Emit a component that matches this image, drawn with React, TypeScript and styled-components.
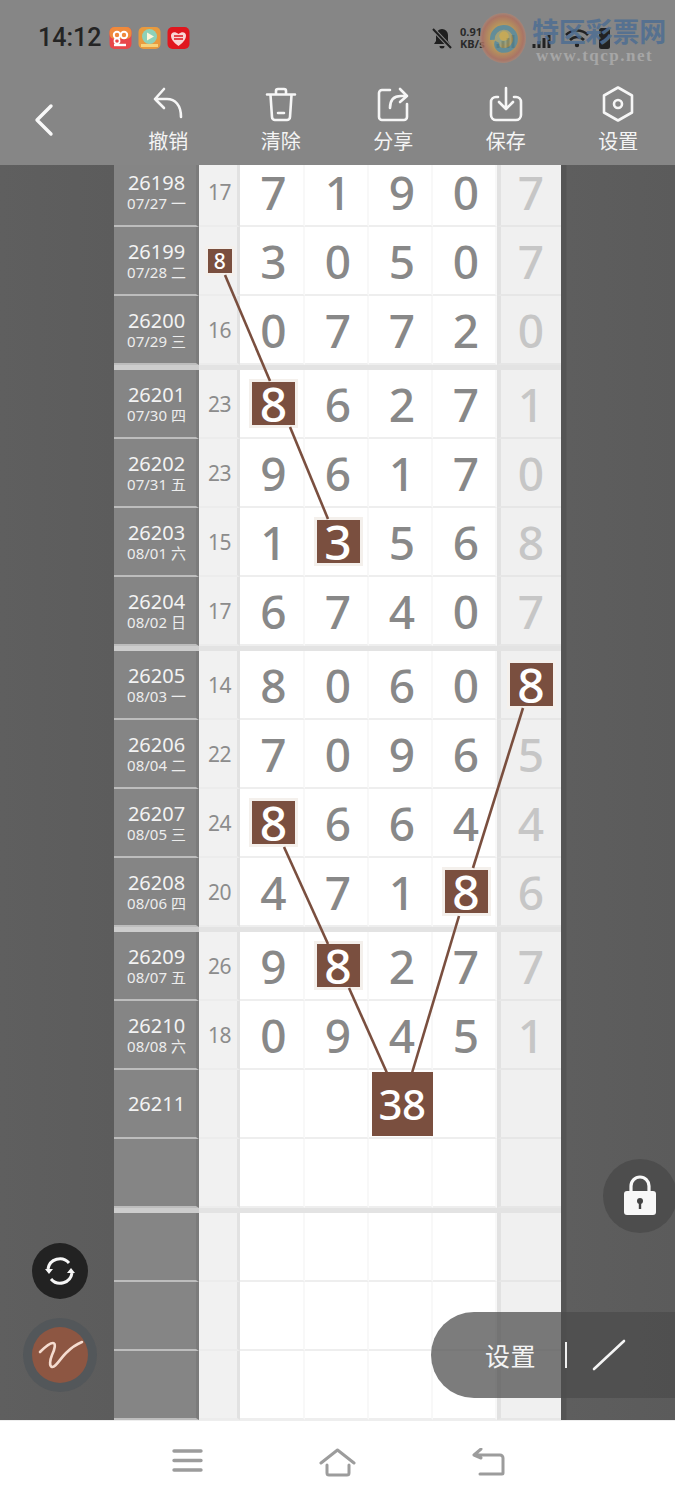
import React from "react";
import styled, { createGlobalStyle } from "styled-components";

const Global = createGlobalStyle`
  html, body { margin: 0; padding: 0; background: #fff; }
  body { font-family: "Noto Sans", "Noto Sans CJK SC", sans-serif; }
  * { box-sizing: border-box; }
`;

const Page = styled.div`
  position: relative;
  width: 675px;
  height: 1500px;
  overflow: hidden;
  display: flex;
  flex-direction: column;
  background: #fff;
`;

const Header = styled.header`
  height: 165px;
  background: #868686;
  display: flex;
  flex-direction: column;
  position: relative;
  z-index: 1;
`;

const StatusBar = styled.div`
  height: 76px;
  padding: 0 0 0 38px;
  display: flex;
  align-items: center;
`;

const Clock = styled.span`
  font: 500 25px/30px Roboto, sans-serif;
  color: #242424;
  margin-right: 8px;
`;

const AppIcons = styled.div`
  display: flex;
  gap: 6px;
`;

const StatusRight = styled.div`
  margin-left: auto;
  display: flex;
  align-items: center;
  padding-right: 65px;
  gap: 6px;
  color: #222;
`;

const Speed = styled.span`
  font: 700 11px/12px "Noto Sans", sans-serif;
  width: 30px;
  color: #2a2a2a;
`;

const Watermark = styled.div`
  position: absolute;
  left: 478px;
  top: 9px;
  width: 197px;
  height: 56px;
  display: flex;
  gap: 4px;
  z-index: 2;
`;

const WatermarkLogo = styled.svg`
  flex: none;
  opacity: 0.85;
`;

const WatermarkText = styled.div`
  display: flex;
  flex-direction: column;
  align-items: flex-start;
  padding-top: 5px;
`;

const WatermarkTitle = styled.span`
  font: 700 27px/33px "Noto Sans CJK SC", sans-serif;
  color: #4e6e92;
  opacity: 0.85;
  letter-spacing: -0.2px;
`;

const WatermarkUrl = styled.span`
  font: 700 17px/17px "Liberation Serif", serif;
  color: #a6a6a6;
  letter-spacing: 1.5px;
  margin-left: 4px;
  white-space: nowrap;
`;

const Toolbar = styled.nav`
  height: 89px;
  display: flex;
  align-items: flex-start;
`;

const BackButton = styled.div`
  width: 112px;
  height: 89px;
  padding: 26px 0 0 32px;
`;

const ToolItem = styled.div`
  width: 112.5px;
  display: flex;
  flex-direction: column;
  align-items: center;
  padding-top: 10px;
`;

const ToolIcon = styled.div`
  width: 36px;
  height: 36px;
  display: flex;
  align-items: center;
  justify-content: center;
`;

const ToolLabel = styled.span`
  font: 400 20px/26px "Noto Sans CJK SC", sans-serif;
  color: #f4f4f4;
  margin-top: 6px;
`;

const Main = styled.main`
  position: relative;
  height: 1255px;
  display: flex;
  background: #5b5b5b;
  overflow: hidden;
`;

const Side = styled.div<{ $w: number; $right?: boolean }>`
  width: ${(p) => p.$w}px;
  background: ${(p) =>
    p.$right
      ? "linear-gradient(90deg, #555 0, #555 5px, #5e5e5e 6px, #5b5b5b 100%)"
      : "linear-gradient(90deg, #5f5f5f 0, #5c5c5c 100%)"};
`;

const Table = styled.div`
  width: 447px;
  display: flex;
  flex-direction: column;
  background: #fff;
`;

const RowEl = styled.div<{ $clip?: boolean }>`
  height: 69px;
  margin-top: ${(p) => (p.$clip ? "-7px" : "0")};
  display: flex;
  flex: none;
`;

const Info = styled.div`
  width: 85px;
  background: #858585;
  border-bottom: 2px solid #bdbdbd;
  border-right: 3px solid #7b7b7b;
  display: flex;
  flex-direction: column;
  align-items: center;
  justify-content: center;
  color: #f3f3f3;
  padding-left: 3px;
`;

const Period = styled.span`
  font: 400 20px/23px "Noto Sans", sans-serif;
`;

const DateText = styled.span`
  font: 400 15px/19px "Noto Sans", "Noto Sans CJK SC", sans-serif;
  white-space: nowrap;
  color: #ededed;
`;

const Sum = styled.div`
  width: 41px;
  background: #f1f1f1;
  border-right: 3px solid #e2e2e2;
  border-bottom: 2px solid #ececec;
  padding-left: 3px;
  display: flex;
  align-items: center;
  justify-content: center;
  font: 400 21px/24px "Noto Sans", sans-serif;
  color: #8c8c8c;
  letter-spacing: -0.5px;
`;

const Digit = styled.div<{ $w: number }>`
  width: ${(p) => p.$w}px;
  background: #fff;
  border-right: 2px solid #f8f8f8;
  border-bottom: 2px solid #eeeeee;
  padding-left: 4px;
  display: flex;
  align-items: center;
  justify-content: center;
  font: 500 46px/50px "Noto Sans", sans-serif;
  color: #888;
`;

const Last = styled.div`
  width: 64px;
  background: #f0f0f0;
  border-left: 4px solid #e2e2e2;
  border-bottom: 2px solid #e6e6e6;
  display: flex;
  align-items: center;
  justify-content: center;
  font: 500 46px/50px "Noto Sans", sans-serif;
  color: #c6c6c6;
`;

const Badge = styled.div<{ $kind: "big" | "small" | "total" }>`
  flex: none;
  display: flex;
  align-items: center;
  justify-content: center;
  background: #7a4f3f;
  color: #fff;
  ${(p) =>
    p.$kind === "big"
      ? `width: 49px; height: 49px; border: 3px solid #f4f0ec; font: 500 48px/50px "Noto Sans", sans-serif;`
      : p.$kind === "small"
        ? `width: 30px; height: 30px; border: 3px solid #f4f0ec; font: 500 21px/24px "Noto Sans", sans-serif;`
        : `width: 61px; height: 64px; font: 500 42px/50px "Noto Sans", sans-serif; letter-spacing: -0.5px;`}
`;

const Divider = styled.div`
  height: 5px;
  display: flex;
  flex: none;
  background: #e3e3e3;
`;

const DividerInfo = styled.div`
  width: 85px;
  background: #cdcdcd;
`;

const Lines = styled.svg`
  position: absolute;
  left: 0;
  top: 0;
  width: 675px;
  height: 1255px;
  pointer-events: none;
`;

const RoundBtn = styled.div<{ $left?: number; $top: number; $size: number; $bg: string }>`
  position: absolute;
  left: ${(p) => p.$left}px;
  top: ${(p) => p.$top}px;
  width: ${(p) => p.$size}px;
  height: ${(p) => p.$size}px;
  border-radius: 50%;
  background: ${(p) => p.$bg};
  display: flex;
  align-items: center;
  justify-content: center;
`;

const BrushInner = styled.div`
  width: 56px;
  height: 56px;
  border-radius: 50%;
  background: #8d5642;
  display: flex;
  align-items: center;
  justify-content: center;
`;

const Pill = styled.div`
  position: absolute;
  left: 431px;
  top: 1147px;
  width: 244px;
  height: 86px;
  border-radius: 43px 0 0 43px;
  background: rgba(75, 75, 75, 0.73);
  display: flex;
  align-items: center;
  padding-left: 54px;
`;

const PillLabel = styled.span`
  font: 400 25px/30px "Noto Sans CJK SC", sans-serif;
  color: #f4f4f4;
  width: 80px;
  letter-spacing: 0.5px;
`;

const PillBar = styled.span`
  width: 2px;
  height: 26px;
  background: #f0f0f0;
  margin-right: 25px;
`;

const NavBar = styled.footer`
  height: 80px;
  background: #fff;
  border-top: 1px solid #eee;
  display: flex;
  align-items: flex-start;
  padding-top: 27px;
`;

const NavSlot = styled.div<{ $w: number; $pad: number }>`
  width: ${(p) => p.$w}px;
  padding-left: ${(p) => p.$pad}px;
  display: flex;
`;

type Cell = number | string | null;
type Row = {
  id?: string;
  date?: string;
  sum?: string;
  badgeSum?: string;
  d?: Cell[];
  hit?: number;
  total?: number;
  clip?: boolean;
};

const widths = [65, 64, 64, 64];

const groups: Row[][] = [
  [
    { id: "26198", date: "07/27 一", sum: "17", d: [7, 1, 9, 0, 7], clip: true },
    { id: "26199", date: "07/28 二", badgeSum: "8", d: [3, 0, 5, 0, 7] },
    { id: "26200", date: "07/29 三", sum: "16", d: [0, 7, 7, 2, 0] },
  ],
  [
    { id: "26201", date: "07/30 四", sum: "23", d: [8, 6, 2, 7, 1], hit: 0 },
    { id: "26202", date: "07/31 五", sum: "23", d: [9, 6, 1, 7, 0] },
    { id: "26203", date: "08/01 六", sum: "15", d: [1, 3, 5, 6, 8], hit: 1 },
    { id: "26204", date: "08/02 日", sum: "17", d: [6, 7, 4, 0, 7] },
  ],
  [
    { id: "26205", date: "08/03 一", sum: "14", d: [8, 0, 6, 0, 8], hit: 4 },
    { id: "26206", date: "08/04 二", sum: "22", d: [7, 0, 9, 6, 5] },
    { id: "26207", date: "08/05 三", sum: "24", d: [8, 6, 6, 4, 4], hit: 0 },
    { id: "26208", date: "08/06 四", sum: "20", d: [4, 7, 1, 8, 6], hit: 3 },
  ],
  [
    { id: "26209", date: "08/07 五", sum: "26", d: [9, 8, 2, 7, 7], hit: 1 },
    { id: "26210", date: "08/08 六", sum: "18", d: [0, 9, 4, 5, 1] },
    { id: "26211", d: [null, null, "38", null, null], total: 2 },
    {},
  ],
  [{}, {}, {}],
];

const segments = [
  [225, 110, 270, 216],
  [290, 262, 328, 354],
  [284, 682, 328, 779],
  [349, 823, 387, 908],
  [523, 543, 473, 703],
  [459, 751, 412, 908],
];

function TableRow({ r }: { r: Row }) {
  const d = r.d ?? [null, null, null, null, null];
  return (
    <RowEl $clip={r.clip}>
      <Info>
        {r.id && <Period>{r.id}</Period>}
        {r.date && <DateText>{r.date}</DateText>}
      </Info>
      <Sum>{r.badgeSum ? <Badge $kind="small">{r.badgeSum}</Badge> : r.sum}</Sum>
      {widths.map((w, i) => (
        <Digit key={i} $w={w}>
          {r.total === i ? (
            <Badge $kind="total">{d[i]}</Badge>
          ) : r.hit === i ? (
            <Badge $kind="big">{d[i]}</Badge>
          ) : (
            d[i]
          )}
        </Digit>
      ))}
      <Last>{r.hit === 4 ? <Badge $kind="big">{d[4]}</Badge> : d[4]}</Last>
    </RowEl>
  );
}

const stroke = { fill: "none", stroke: "#f6f6f6", strokeWidth: 2.6, strokeLinecap: "round", strokeLinejoin: "round" } as const;

export default function App() {
  return (
    <Page>
      <Global />
      <Header>
        <StatusBar>
          <Clock>14:12</Clock>
          <AppIcons>
            <svg width="23" height="24" viewBox="0 0 23 24">
              <rect x="0.5" y="1" width="22" height="22" rx="5" fill="#e8474a" />
              <rect x="0.5" y="1" width="22" height="12" rx="5" fill="#ef8a3c" />
              <circle cx="8" cy="9" r="3.2" fill="none" stroke="#fff" strokeWidth="2" />
              <circle cx="15" cy="9" r="3.2" fill="none" stroke="#fff" strokeWidth="2" />
              <path d="M5 19h12" stroke="#fff" strokeWidth="2.4" />
              <circle cx="8" cy="15" r="2.6" fill="none" stroke="#fff" strokeWidth="1.6" />
            </svg>
            <svg width="23" height="24" viewBox="0 0 23 24">
              <rect x="0.5" y="1" width="22" height="22" rx="5" fill="#e89a3e" />
              <circle cx="11.5" cy="10.5" r="7.5" fill="#8ed1b8" />
              <path d="M9 6.5l7 4-7 4z" fill="#fff6d8" />
              <rect x="3" y="18" width="17" height="3" fill="#f7d27a" />
            </svg>
            <svg width="23" height="24" viewBox="0 0 23 24">
              <rect x="0.5" y="1" width="22" height="22" rx="5" fill="#e0161e" />
              <path d="M11.5 20C6 16 4 13 4 9.5 4 6.5 7.5 4.500 11.5 8c4-3.500 7.500-1.500 7.500 1.500 0 3.500-2 6.500-7.500 10.500z" fill="#f9d6d6" />
              <path d="M7 10h9M7 13h9" stroke="#e0161e" strokeWidth="1.5" />
            </svg>
          </AppIcons>
          <StatusRight>
            <svg width="24" height="24" viewBox="0 0 24 24">
              <path d="M12 3a6 6 0 0 0-6 6v6l-2 3h16l-2-3V9a6 6 0 0 0-6-6zM9.500 20a2.500 2.500 0 0 0 5 0z" fill="#1f1f1f" />
              <path d="M3 3l18 19" stroke="#868686" strokeWidth="4" />
              <path d="M3 3l18 19" stroke="#1f1f1f" strokeWidth="2" />
            </svg>
            <Speed>
              0.91
              <br />
              KB/s
            </Speed>
            <svg width="114" height="24" viewBox="0 0 114 24">
              <path d="M2 22v-4M7 22v-7M12 22v-10M17 22v-13M38 22v-4M43 22v-7M48 22v-10M53 22v-13" stroke="#222" strokeWidth="3" />
              <path d="M70 9c6-6 16-6 22 0M74 14c4-4 10-4 14 0" fill="none" stroke="#222" strokeWidth="2.6" />
              <circle cx="81" cy="19" r="2.200" fill="#222" />
              <rect x="103" y="2" width="11" height="21" rx="2.500" fill="#222" />
            </svg>
          </StatusRight>
        </StatusBar>
        <Toolbar>
          <BackButton>
            <svg width="24" height="36" viewBox="0 0 24 36">
              <path d="M19 4L5 18l14 14" fill="none" stroke="#f8f8f8" strokeWidth="3.4" strokeLinecap="round" strokeLinejoin="round" />
            </svg>
          </BackButton>
          <ToolItem>
            <ToolIcon>
              <svg width="36" height="36" viewBox="0 0 36 36">
                <path d="M14 3L5 13l9 9M5 13h12c8 0 14 6 14 18" {...stroke} />
              </svg>
            </ToolIcon>
            <ToolLabel>撤销</ToolLabel>
          </ToolItem>
          <ToolItem>
            <ToolIcon>
              <svg width="36" height="36" viewBox="0 0 36 36">
                <path d="M4 8.500h28M13 8V5a2 2 0 0 1 2-2h6a2 2 0 0 1 2 2v3M7.500 9l1.500 22a3 3 0 0 0 3 3h12a3 3 0 0 0 3-3l1.500-22M15 27h6" {...stroke} />
              </svg>
            </ToolIcon>
            <ToolLabel>清除</ToolLabel>
          </ToolItem>
          <ToolItem>
            <ToolIcon>
              <svg width="36" height="36" viewBox="0 0 36 36">
                <path d="M15 4H7a3 3 0 0 0-3 3v24a3 3 0 0 0 3 3h22a3 3 0 0 0 3-3v-13M25 3l7 7-7 6M32 10h-6c-6 0-11 3-11 12" {...stroke} />
              </svg>
            </ToolIcon>
            <ToolLabel>分享</ToolLabel>
          </ToolItem>
          <ToolItem>
            <ToolIcon>
              <svg width="36" height="36" viewBox="0 0 36 36">
                <path d="M10 11H8a5 5 0 0 0-5 5v13a5 5 0 0 0 5 5h20a5 5 0 0 0 5-5V16a5 5 0 0 0-5-5h-2M18 2v20M11 16l7 7 7-7" {...stroke} />
              </svg>
            </ToolIcon>
            <ToolLabel>保存</ToolLabel>
          </ToolItem>
          <ToolItem>
            <ToolIcon>
              <svg width="36" height="36" viewBox="0 0 36 36">
                <path d="M18 1.500l14 8v17l-14 8-14-8v-17z" {...stroke} />
                <circle cx="18" cy="18" r="4" {...stroke} />
              </svg>
            </ToolIcon>
            <ToolLabel>设置</ToolLabel>
          </ToolItem>
        </Toolbar>
      </Header>

      <Main>
        <Side $w={114} />
        <Table>
          {groups.map((g, i) => (
            <React.Fragment key={i}>
              {i > 0 && (
                <Divider>
                  <DividerInfo />
                </Divider>
              )}
              {g.map((r, j) => (
                <TableRow key={j} r={r} />
              ))}
            </React.Fragment>
          ))}
        </Table>
        <Side $w={114} $right />
        <Lines viewBox="0 0 675 1255">
          {segments.map((s, i) => (
            <line key={i} x1={s[0]} y1={s[1]} x2={s[2]} y2={s[3]} stroke="#7a4f3f" strokeWidth="2.6" />
          ))}
        </Lines>
        <RoundBtn $left={603} $top={994} $size={74} $bg="#4d4d4d">
          <svg width="36" height="42" viewBox="0 0 36 42">
            <path d="M9 18v-7a9 9 0 0 1 18 0v7" fill="none" stroke="#f8f8f8" strokeWidth="3.2" />
            <rect x="2" y="16" width="32" height="24" rx="3" fill="#f8f8f8" />
            <circle cx="18" cy="26" r="3" fill="#444" />
            <rect x="16.800" y="27" width="2.400" height="7" fill="#444" />
          </svg>
        </RoundBtn>
        <RoundBtn $left={32} $top={1078} $size={56} $bg="#222">
          <svg width="32" height="32" viewBox="0 0 32 32">
            <path d="M4 14a12 12 0 0 1 21-6M28 18a12 12 0 0 1-21 6" fill="none" stroke="#f6f6f6" strokeWidth="3" />
            <path d="M1 14h8l-4 5zM31 18h-8l4-5z" fill="#f6f6f6" />
          </svg>
        </RoundBtn>
        <RoundBtn $left={23} $top={1153} $size={74} $bg="#53575a">
          <BrushInner>
            <svg width="48" height="48" viewBox="0 0 48 48">
              <path d="M4 21c4-4 10-9 13-9 3 0 2 6-1 12-2 5-3 11 0 12 3 1 8-8 14-14 5-5 11-9 16-11" fill="none" stroke="#f5dcd0" strokeWidth="2.600" strokeLinecap="round" />
            </svg>
          </BrushInner>
        </RoundBtn>
        <Pill>
          <PillLabel>设置</PillLabel>
          <PillBar />
          <svg width="34" height="32" viewBox="0 0 34 32">
            <path d="M2 30L32 2" stroke="#f4f4f4" strokeWidth="2.600" strokeLinecap="round" />
          </svg>
        </Pill>
      </Main>

      <NavBar>
        <NavSlot $w={317} $pad={172}>
          <svg width="32" height="26" viewBox="0 0 32 26">
            <path d="M2 3h27M2 12.500h27M2 22h27" stroke="#9c9c9c" strokeWidth="3.400" strokeLinecap="round" />
          </svg>
        </NavSlot>
        <NavSlot $w={153} $pad={2}>
          <svg width="38" height="30" viewBox="0 0 38 30">
            <path d="M2 15L18.500 2 35 15M8 17v8a2 2 0 0 0 2 2h18a2 2 0 0 0 2-2v-8" fill="none" stroke="#9c9c9c" strokeWidth="3" strokeLinecap="round" strokeLinejoin="round" />
          </svg>
        </NavSlot>
        <NavSlot $w={100} $pad={2}>
          <svg width="34" height="30" viewBox="0 0 34 30">
            <path d="M2 7h26a3 3 0 0 1 3 3v15a1 1 0 0 1-1 1H8M9 1L2 7l7 3" fill="none" stroke="#9c9c9c" strokeWidth="3" strokeLinecap="round" strokeLinejoin="round" />
          </svg>
        </NavSlot>
      </NavBar>

      <Watermark>
        <WatermarkLogo width="50" height="56" viewBox="0 0 52 56">
          <defs>
            <radialGradient id="wm" cx="0.5" cy="0.5" r="0.55">
              <stop offset="0" stopColor="#7fb0a8" />
              <stop offset="0.45" stopColor="#c9a24e" />
              <stop offset="0.8" stopColor="#b5705c" />
              <stop offset="1" stopColor="#a8988a" />
            </radialGradient>
          </defs>
          <ellipse cx="26" cy="29" rx="24" ry="26" fill="url(#wm)" opacity="0.9" />
          <path d="M15 31a12 12 0 1 1 12 11c-6 0-9-5-7-9" fill="none" stroke="#5e8f9c" strokeWidth="5" />
          <circle cx="27" cy="27" r="5" fill="#d0b050" />
        </WatermarkLogo>
        <WatermarkText>
          <WatermarkTitle>特区彩票网</WatermarkTitle>
          <WatermarkUrl>www.tqcp.net</WatermarkUrl>
        </WatermarkText>
      </Watermark>
    </Page>
  );
}
